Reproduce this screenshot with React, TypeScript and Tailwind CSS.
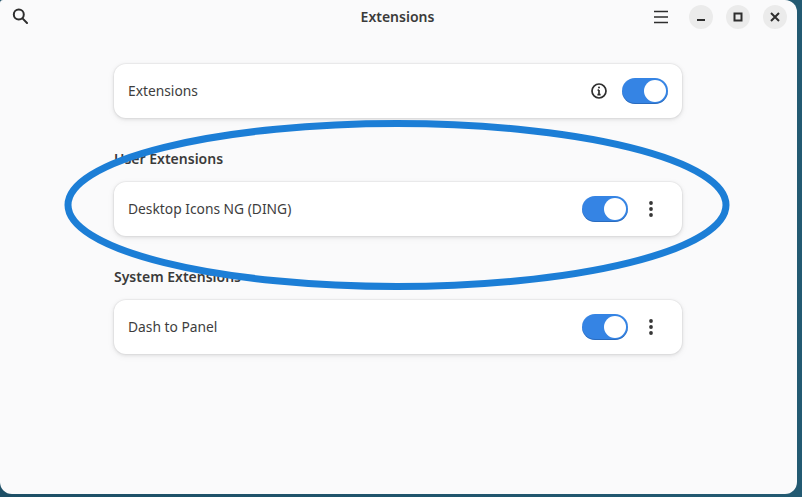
import React from 'react';

const Toggle = () => (
  <div className="w-[46px] h-[26px] rounded-full bg-[#3584e4] flex items-center justify-end pr-[2px] shadow-[inset_0_-1px_0_rgba(20,60,120,0.35)]">
    <div className="w-[22px] h-[22px] rounded-full bg-white" />
  </div>
);

const Dots = () => (
  <svg width="16" height="16" viewBox="0 0 16 16" className="ml-[15px] mr-[9px] text-[#363636]" fill="currentColor">
    <circle cx="8" cy="2" r="1.9" />
    <circle cx="8" cy="8" r="1.9" />
    <circle cx="8" cy="14" r="1.9" />
  </svg>
);

const Row = ({ title, children }: { title: string; children: React.ReactNode }) => (
  <div className="h-[54px] rounded-[12px] bg-white shadow-[0_0_0_1px_rgba(0,0,0,0.03),0_1px_3px_1px_rgba(0,0,0,0.07),0_2px_6px_2px_rgba(0,0,0,0.03)] flex items-center px-[14px]">
    <span className="flex-1 text-[13.8px] text-[#3d3d3d]">{title}</span>
    {children}
  </div>
);

const WinButton = ({ children }: { children: React.ReactNode }) => (
  <div className="w-6 h-6 rounded-full bg-[#ebebeb] flex items-center justify-center">
    <svg width="16" height="16" viewBox="0 0 16 16" fill="none" stroke="#2e2e2e" strokeWidth="2">
      {children}
    </svg>
  </div>
);

export default function App() {
  return (
    <div className="relative w-[802px] h-[497px] overflow-hidden bg-[linear-gradient(90deg,#1d4f66,#235a72)] font-['Noto_Sans',sans-serif]">
      <div className="w-[797px] h-[494px] bg-[#fafafb] rounded-tl-[3px] rounded-tr-[12px] rounded-br-[12px] rounded-bl-[12px] flex flex-col">
        {/* Header */}
        <header className="h-[34px] flex items-center pl-[12px] pr-[10px]">
          <svg width="16" height="16" viewBox="0 0 16 16" fill="none" stroke="#2e2e2e" strokeWidth="2" className="mb-[2px]">
            <circle cx="6.8" cy="6.6" r="5" />
            <path d="M10.5 10.4 15 15" strokeLinecap="round" />
          </svg>
          <div className="flex-1 text-center text-[14px] font-semibold text-[#3a3a3a] pl-[114px] mb-[2px]">Extensions</div>
          <div className="flex items-center">
            <svg width="16" height="16" viewBox="0 0 16 16" fill="none" stroke="#2e2e2e" strokeWidth="1.6" className="mr-[20px]">
              <path d="M1 2.5h14M1 8h14M1 13.5h14" />
            </svg>
            <div className="flex items-center gap-[13px]">
              <WinButton><path d="M4 11h8" /></WinButton>
              <WinButton><rect x="4.5" y="4.5" width="7" height="7" /></WinButton>
              <WinButton><path d="M4 4l8 8M12 4l-8 8" /></WinButton>
            </div>
          </div>
        </header>

        {/* Content */}
        <main className="w-[568px] ml-[114px] mt-[30px] flex flex-col">
          <Row title="Extensions">
            <svg width="16" height="16" viewBox="0 0 16 16" fill="none" stroke="#2e2e2e" strokeWidth="1.7" className="mr-[15px]">
              <circle cx="8" cy="8" r="7" />
              <path d="M8 7v4.5M6.6 7.2H8M6.4 11.6h3.2" />
              <circle cx="8" cy="4.4" r="1" fill="#2e2e2e" stroke="none" />
            </svg>
            <Toggle />
          </Row>

          <h2 className="mt-[31px] h-[20px] leading-[20px] text-[14px] font-semibold text-[#3a3a3a]">User Extensions</h2>
          <div className="mt-[13px]">
            <Row title="Desktop Icons NG (DING)">
              <Toggle />
              <Dots />
            </Row>
          </div>

          <h2 className="mt-[31px] h-[20px] leading-[20px] text-[14px] font-semibold text-[#3a3a3a]">System Extensions</h2>
          <div className="mt-[13px]">
            <Row title="Dash to Panel">
              <Toggle />
              <Dots />
            </Row>
          </div>
        </main>
      </div>

      {/* Annotation circled over the screenshot */}
      <svg className="absolute left-0 top-0 pointer-events-none" width="802" height="497" viewBox="0 0 802 497" fill="none">
        <ellipse cx="397" cy="205" rx="329" ry="81.5" stroke="#1c7ed6" strokeWidth="7" />
      </svg>
    </div>
  );
}
